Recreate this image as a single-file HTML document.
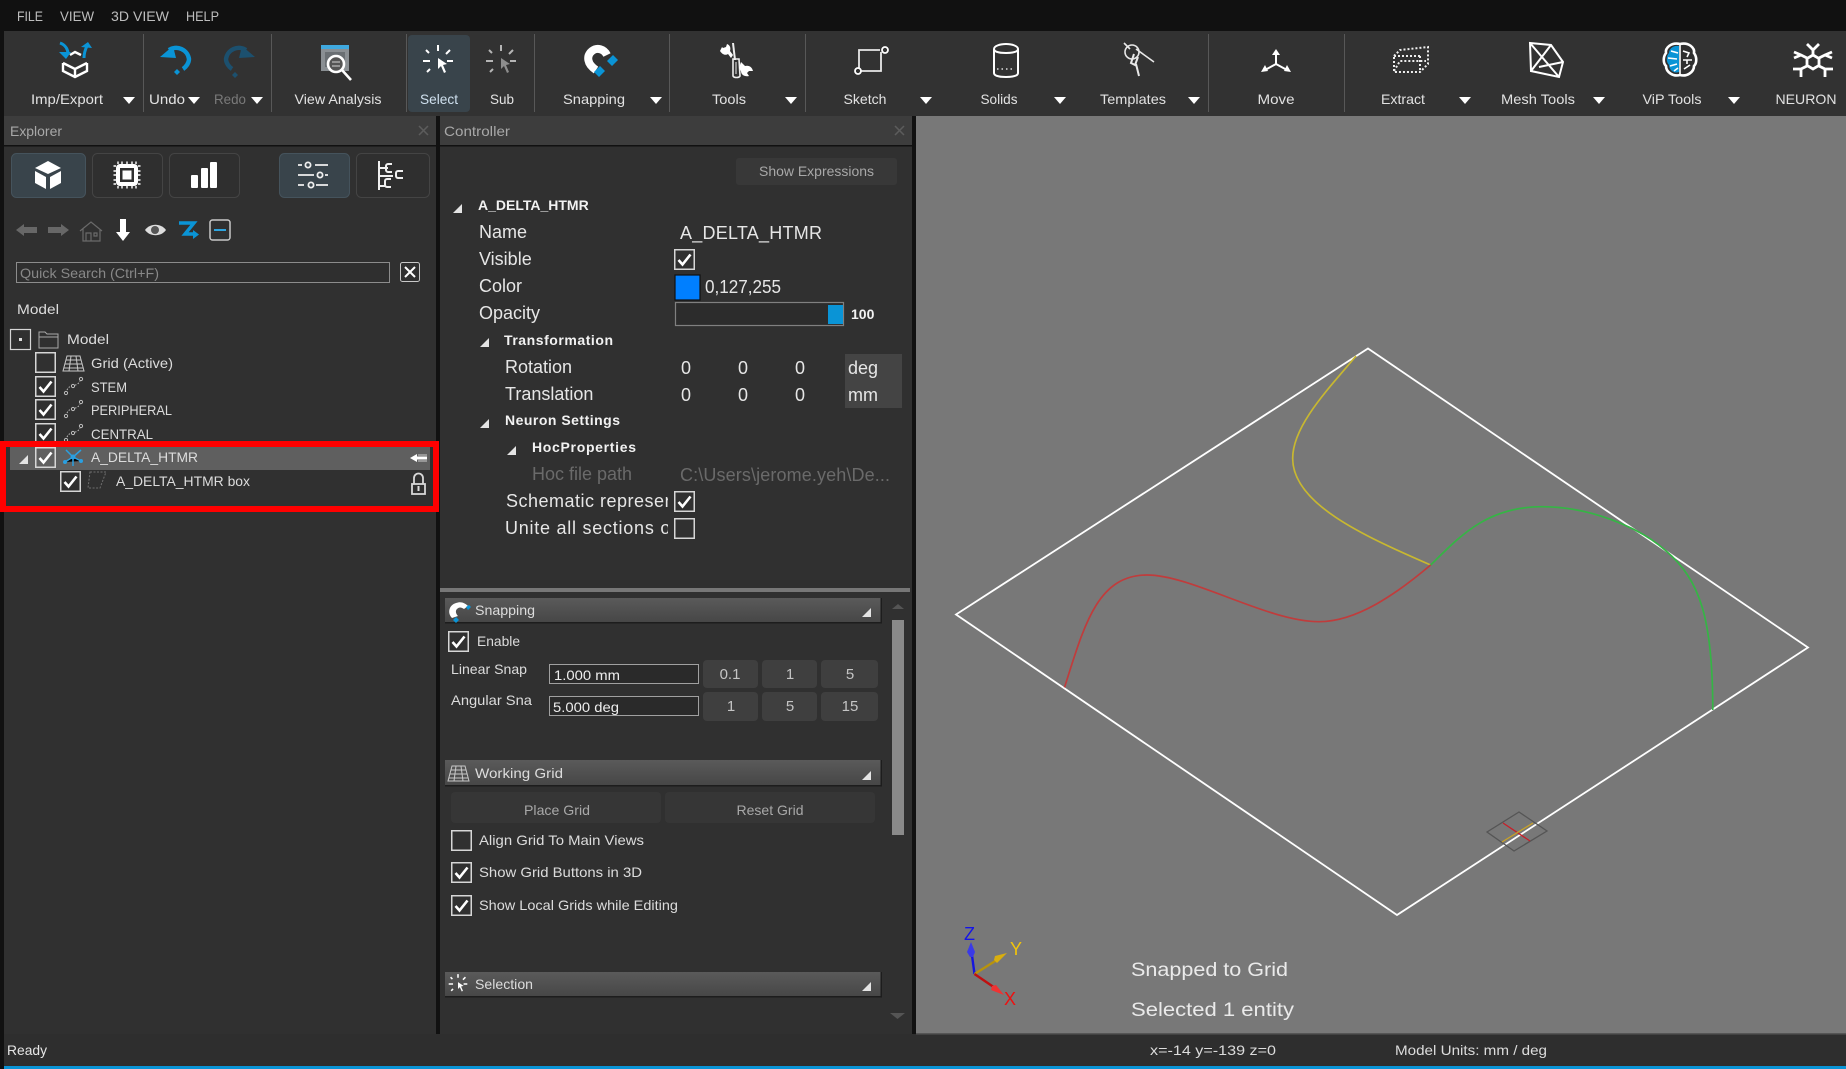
<!DOCTYPE html>
<html><head><meta charset="utf-8"><title>Sim4Life</title>
<style>
html,body{margin:0;padding:0;background:#111;width:1846px;height:1069px;overflow:hidden}
svg{display:block;position:absolute;left:0;top:0}
text{font-family:"Liberation Sans",sans-serif;font-size:14px;fill:#dcdcdc}
.m{fill:#bdbdbd}
.t{text-anchor:middle;fill:#e2e2e2}
.h{fill:#a8a8a8}
.v{fill:#c4c4c4;font-size:15px}
.p{font-size:18px;fill:#e6e6e6}
.b{font-weight:bold;fill:#f2f2f2}
.d{fill:#6a6a6a;font-size:18px}
.w{stroke:#fff;fill:none;stroke-width:2}
</style></head><body>
<svg width="1846" height="1069" viewBox="0 0 1846 1069" xmlns="http://www.w3.org/2000/svg">
<defs>
<linearGradient id="hd" x1="0" y1="0" x2="0" y2="1"><stop offset="0" stop-color="#5a5a5a"/><stop offset="1" stop-color="#464646"/></linearGradient>
<g id="cb"><rect x=".75" y=".75" width="19.5" height="19.5" fill="none" stroke="#d6d6d6" stroke-width="1.5"/></g>
<g id="cc"><rect x=".75" y=".75" width="19.5" height="19.5" fill="none" stroke="#d6d6d6" stroke-width="1.5"/><path d="M4.5 11l4 4.5 8-10" fill="none" stroke="#fff" stroke-width="2.6"/></g>
<g id="tri"><path d="M0 9h9V0z" fill="#e4e4e4"/></g>
<g id="car"><path d="M0 0h12l-6 7z" fill="#fff"/></g>
<g id="sp" fill="none" stroke="#bcbcbc" stroke-width="1"><circle cx="2" cy="16" r="1.6"/><circle cx="9" cy="9" r="1.6"/><circle cx="17" cy="2" r="1.6"/><path d="M3 13c1-2 2-3 4-4M11 8c2 0 4-2 5-4" stroke-dasharray="1.5 1.5"/></g>
<g id="sel" fill="none" stroke-linecap="butt"><path d="M0-16v6M-12-11l3 3M12-11l-4 4M-15 0h7M15 0H9M-11 11l3-3"/><path d="M0-3l9 6-4 1 3 7-2 1-3-7-3 3z" stroke="none" fill="currentColor"/></g>
<g id="gr" fill="none" stroke="#c8c8c8" stroke-width="1"><path d="M4 1h13l4 15H0zM8 1L6 16M13 1l2 15M3 5h15M2 9h17M1 13h19"/></g>
</defs>

<!-- base -->
<rect width="1846" height="1069" fill="#111"/>
<rect x="4" y="31" width="1842" height="85" fill="#323232"/>

<!-- menu -->
<text class="m" x="17" y="21" textLength="26" lengthAdjust="spacingAndGlyphs">FILE</text>
<text class="m" x="60" y="21" textLength="34" lengthAdjust="spacingAndGlyphs">VIEW</text>
<text class="m" x="111" y="21" textLength="58" lengthAdjust="spacingAndGlyphs">3D VIEW</text>
<text class="m" x="186" y="21" textLength="33" lengthAdjust="spacingAndGlyphs">HELP</text>

<!-- toolbar separators -->
<g fill="#585858"><rect x="143" y="34" width="1" height="78"/><rect x="271" y="34" width="1" height="78"/><rect x="406" y="34" width="1" height="78"/><rect x="534" y="34" width="1" height="78"/><rect x="669" y="34" width="1" height="78"/><rect x="805" y="34" width="1" height="78"/><rect x="1208" y="34" width="1" height="78"/><rect x="1344" y="34" width="1" height="78"/></g>
<rect x="408" y="35" width="62" height="77" rx="4" fill="#39444b"/>

<!-- toolbar labels -->
<text class="t" x="67" y="104" textLength="72" lengthAdjust="spacingAndGlyphs">Imp/Export</text>
<text class="t" x="167" y="104" textLength="36" lengthAdjust="spacingAndGlyphs">Undo</text>
<text class="t" x="230" y="104" textLength="32" lengthAdjust="spacingAndGlyphs" style="fill:#7a7a7a">Redo</text>
<text class="t" x="338" y="104" textLength="87" lengthAdjust="spacingAndGlyphs">View Analysis</text>
<text class="t" x="439" y="104" textLength="38" lengthAdjust="spacingAndGlyphs" style="fill:#cfe0ee">Select</text>
<text class="t" x="502" y="104" textLength="24" lengthAdjust="spacingAndGlyphs">Sub</text>
<text class="t" x="594" y="104" textLength="62" lengthAdjust="spacingAndGlyphs">Snapping</text>
<text class="t" x="729" y="104" textLength="34" lengthAdjust="spacingAndGlyphs">Tools</text>
<text class="t" x="865" y="104" textLength="43" lengthAdjust="spacingAndGlyphs">Sketch</text>
<text class="t" x="999" y="104" textLength="37" lengthAdjust="spacingAndGlyphs">Solids</text>
<text class="t" x="1133" y="104" textLength="66" lengthAdjust="spacingAndGlyphs">Templates</text>
<text class="t" x="1276" y="104" textLength="37" lengthAdjust="spacingAndGlyphs">Move</text>
<text class="t" x="1403" y="104" textLength="44" lengthAdjust="spacingAndGlyphs">Extract</text>
<text class="t" x="1538" y="104" textLength="74" lengthAdjust="spacingAndGlyphs">Mesh Tools</text>
<text class="t" x="1672" y="104" textLength="59" lengthAdjust="spacingAndGlyphs">ViP Tools</text>
<text class="t" x="1806" y="104" textLength="61" lengthAdjust="spacingAndGlyphs">NEURON</text>
<use href="#car" x="123" y="97"/><use href="#car" x="188" y="97"/><use href="#car" x="251" y="97"/><use href="#car" x="650" y="97"/><use href="#car" x="785" y="97"/><use href="#car" x="920" y="97"/><use href="#car" x="1054" y="97"/><use href="#car" x="1188" y="97"/><use href="#car" x="1459" y="97"/><use href="#car" x="1593" y="97"/><use href="#car" x="1728" y="97"/>

<!-- toolbar icons -->
<g fill="none" stroke="#fff" stroke-width="2.4"><path d="M63 63v8l12 6 12-6v-8M63 63l12 6 12-6M75 69v8M70 55l5-3 6 3"/></g>
<path d="M60 43c6 2 8 7 8 11" fill="none" stroke="#0a94d6" stroke-width="3"/><path d="M59 52h12l-5 7z" fill="#0a94d6"/>
<path d="M84 58c0-5 1-8 3-12" fill="none" stroke="#0a94d6" stroke-width="3"/><path d="M81 47l7-5 4 6z" fill="#0a94d6"/>

<path d="M169 50a13 13 0 0 1 20 9c0 4-3 8-6 10" fill="none" stroke="#0a94d6" stroke-width="4.4"/><path d="M160 57l13-11 3 12z" fill="#0a94d6"/><path d="M177 69l3 3-3 3-3-3z" fill="#0a94d6"/>
<path d="M246 50a13 13 0 0 0-20 9c0 4 3 8 6 10" fill="none" stroke="#1c506e" stroke-width="4.4"/><path d="M255 57l-13-11-3 12z" fill="#1c506e"/><path d="M235 72l3 3-3 3-3-3z" fill="#1c506e"/>

<rect x="321" y="45" width="28" height="26" fill="#8a8f93"/><rect x="321" y="45" width="28" height="4" fill="#3fa9df"/><rect x="325" y="52" width="20" height="15" fill="#6a6f73"/>
<circle cx="336" cy="64" r="8" fill="#555" stroke="#fff" stroke-width="2.6"/><path d="M332 62h8M332 66h8" stroke="#aaa" stroke-width="1.5"/><path d="M342 70l9 10" stroke="#fff" stroke-width="2.6"/>

<g transform="translate(438 61)" stroke="#fff" stroke-width="2" color="#fff"><use href="#sel"/></g>
<g transform="translate(501 61)" stroke="#b5b5b5" stroke-width="2" color="#8d8d8d"><use href="#sel"/></g>

<path d="M607 55C604 49 597 47 592 51 586 56 587 64 596 70" fill="none" stroke="#fff" stroke-width="8"/><path d="M613 55l5 5-6 6-5-5z" fill="#0a94d6"/><path d="M600 66l5 5-6 6-5-5z" fill="#0a94d6"/>

<path d="M732 43l2 0 2 17h-2z" fill="#eee"/><path d="M733 59h6l1 17c-1 2-6 2-7 0z" fill="none" stroke="#eee" stroke-width="1.6"/><path d="M736 62v12" stroke="#eee"/>
<path d="M720 50c2 3 5 5 8 3l3 4 2-3-3-4c1-3 0-6-3-7l-1 3-3 1-1-1z" fill="#fff" transform="translate(0 1)"/>
<path d="M741 62l4 4c4-1 7 1 8 5l-4 0-2 2 2 3c-4 1-8-1-8-5l-2-3z" fill="#fff"/>

<path d="M880 50h-21v19M881 52v19h-20" fill="none" stroke="#e8e8e8" stroke-width="1.8"/><circle cx="885" cy="50" r="3" fill="none" stroke="#fff" stroke-width="1.8"/><circle cx="858" cy="71" r="3" fill="none" stroke="#fff" stroke-width="1.8"/>

<path d="M994 49c0-3 6-5 12-5s12 2 12 5v24c0 3-6 4-12 4s-12-1-12-4zM994 49c0 3 6 4 12 4s12-1 12-4" fill="none" stroke="#fff" stroke-width="2"/><path d="M997 69h18" stroke="#ddd" stroke-width="1.5" stroke-dasharray="1.5 3"/>

<g fill="none" stroke="#e8e8e8" stroke-width="1.6"><circle cx="1132" cy="52" r="7"/><path d="M1124 43l6 6M1136 49l18 13" stroke-width="1.6"/><path d="M1134 54l-3 9 4 2 3-8M1136 64l3 12" stroke-width="2"/></g>

<g fill="#fff"><path d="M1276 49l-4 6h8z"/><path d="M1261 72l7-1-3-6z"/><path d="M1291 72l-7-1 3-6z"/></g><path d="M1276 53v11l-11 6M1276 64l11 6" stroke="#fff" stroke-width="2" fill="none"/>

<g fill="none" stroke="#eee" stroke-width="2" stroke-dasharray="2 2"><path d="M1394 56l6-6 28-3v17l-8 8h-26zM1394 71l6-10h26M1394 56h26M1420 56v16"/></g>

<g fill="none" stroke="#fff" stroke-width="2"><path d="M1530 43l21 2 12 17-4 15-28-6zM1530 43l29 34M1551 45l-20 26M1563 62l-24 5"/></g>

<path d="M1680 44c-9-2-15 4-14 9-3 4-3 10 0 13 0 6 7 11 14 9 7 2 14-3 14-9 3-3 3-9 0-13 1-5-5-11-14-9z" fill="#2f2f2f" stroke="#fff" stroke-width="2.6"/>
<path d="M1679 46c-6-1-10 3-10 7-3 3-3 9 0 12 0 5 5 9 10 7z" fill="#0a94d6"/><path d="M1680 44v31" stroke="#fff" stroke-width="1.6"/><path d="M1668 58l9 1M1671 51l7 2M1670 66l7-2M1674 71l4-3M1683 51l6 2-2 4M1683 60h9M1684 69l6-4M1687 60v4" stroke="#fff" stroke-width="1.6" fill="none"/>

<g fill="none" stroke="#fff" stroke-width="2.8"><path d="M1813 55l6 3.500v7l-6 3.500-6-3.500v-7z"/><path d="M1813 55v-5l-6-6M1813 50l6-6M1819 58l6-3 7-3M1825 55l7 3M1807 58l-6-3-7-3M1801 55l-7 3M1819 66l6 3h8M1825 69v8M1807 66l-6 3h-8M1801 69v8"/></g>

<!-- explorer panel -->
<rect x="4" y="116" width="432" height="918" fill="#303030"/>
<rect x="4" y="116" width="432" height="29" fill="#3d3d3d"/><rect x="4" y="145" width="432" height="1.5" fill="#111"/>
<text class="h" x="10" y="136" textLength="52" lengthAdjust="spacingAndGlyphs">Explorer</text>
<path d="M419 126l9 9M428 126l-9 9" stroke="#5c5c5c" stroke-width="1.5"/>

<g stroke-width="1"><rect x="11.5" y="153.5" width="74" height="44" rx="5" fill="#39444b" stroke="#45535c"/><rect x="92.5" y="153.5" width="70" height="44" rx="5" fill="#2f2f2f" stroke="#444"/><rect x="169.5" y="153.5" width="70" height="44" rx="5" fill="#2f2f2f" stroke="#444"/><rect x="279.5" y="153.5" width="70" height="44" rx="5" fill="#39444b" stroke="#45535c"/><rect x="356.5" y="153.5" width="73" height="44" rx="5" fill="#2f2f2f" stroke="#444"/></g>
<path d="M48 161l13 7-13 6-13-6z" fill="#fff"/><path d="M35 171l11 6v12l-11-6z" fill="#fff"/><path d="M61 171l-11 6v12l11-6z" fill="#fff"/>
<rect x="116" y="164" width="22" height="22" rx="4" fill="#fff"/><rect x="120" y="168" width="14" height="14" fill="#2f2f2f"/><rect x="122.500" y="170.500" width="9" height="9" fill="#fff"/>
<path d="M118 161.500v2.500M122 161.500v2.500M127 161.500v2.500M132 161.500v2.500M136 161.500v2.500M118 186v2.500M122 186v2.500M127 186v2.500M132 186v2.500M136 186v2.500M113.500 166h2.500M113.500 171h2.500M113.500 175h2.500M113.500 180h2.500M113.500 184h2.500M138 166h2.500M138 171h2.500M138 175h2.500M138 180h2.500M138 184h2.500" stroke="#fff" stroke-width="1.400"/>
<g fill="#fff"><rect x="191" y="175" width="7" height="13" rx="1"/><rect x="201" y="168" width="7" height="20" rx="1"/><rect x="210" y="162" width="7" height="26" rx="1"/></g>
<g fill="none" stroke="#eee" stroke-width="1.800"><path d="M298 165h4M315 165h13M298 175h16M325 175h3M298 185h6M316 185h12"/><circle cx="308" cy="165" r="2.600"/><circle cx="320" cy="175" r="2.600"/><circle cx="311" cy="185" r="2.600"/></g>
<g fill="none" stroke="#f0f0f0" stroke-width="2"><path d="M379 161v29M379 168h9M379 176h14M379 186h6M392 164h-4a2 2 0 0 0-2 2v4a2 2 0 0 0 2 2h4M403 171h-5a2 2 0 0 0-2 2v3a2 2 0 0 0 2 2h5M391 179h-4a2 2 0 0 0-2 2v4a2 2 0 0 0 2 2h4"/></g>

<!-- explorer tool row -->
<path d="M16 230l8-6v3h13v6H24v3z" fill="#676767"/><path d="M69 230l-8-6v3H48v6h13v3z" fill="#676767"/>
<path d="M80 231l11-9 11 9M83 229v12h17v-12M86 241v-8h5v8M94 233h3v3h-3z" fill="none" stroke="#6a6a6a" stroke-width="1.200"/>
<path d="M120 219h6v13h4l-7 9-7-9h4z" fill="#fff"/>
<path d="M145 230c5-7 16-7 21 0-5 7-16 7-21 0z" fill="#ddd"/><circle cx="155" cy="230" r="4" fill="#555"/>
<path d="M179 223h15l-9 11h8" fill="none" stroke="#0a94d6" stroke-width="3.400"/><path d="M193 230l6 4.500-6 4.500z" fill="#0a94d6"/>
<rect x="210" y="220" width="20" height="20" rx="2.500" fill="none" stroke="#c8c8c8" stroke-width="1.500"/><path d="M214 230h12" stroke="#2fa5df" stroke-width="2"/>

<!-- search -->
<rect x="16.500" y="262.500" width="373" height="20" fill="#2f2f2f" stroke="#8c8c8c"/>
<text x="20" y="278" textLength="139" lengthAdjust="spacingAndGlyphs" style="fill:#888">Quick Search (Ctrl+F)</text>
<rect x="400.500" y="262.500" width="19" height="19" rx="2" fill="none" stroke="#c8c8c8"/><path d="M405 267l10 10M415 267l-10 10" stroke="#fff" stroke-width="2"/>

<text x="17" y="314" textLength="42" lengthAdjust="spacingAndGlyphs">Model</text>

<!-- tree -->
<rect x="10.500" y="329.500" width="20" height="20" fill="none" stroke="#d6d6d6" stroke-width="1.200"/><rect x="19" y="338" width="3" height="3" fill="#ddd"/>
<path d="M39 346v-14h6l2 2h11v14H39zM39 337h19" fill="none" stroke="#a9a9a9"/>
<text x="67" y="344" textLength="42" lengthAdjust="spacingAndGlyphs">Model</text>

<use href="#cb" x="35" y="352"/><use href="#gr" x="63" y="355"/>
<text x="91" y="368" textLength="82" lengthAdjust="spacingAndGlyphs">Grid (Active)</text>
<use href="#cc" x="35" y="376"/><use href="#sp" x="64" y="377"/>
<text x="91" y="392" textLength="36" lengthAdjust="spacingAndGlyphs">STEM</text>
<use href="#cc" x="35" y="399"/><use href="#sp" x="64" y="400"/>
<text x="91" y="415" textLength="81" lengthAdjust="spacingAndGlyphs">PERIPHERAL</text>
<use href="#cc" x="35" y="423"/><use href="#sp" x="64" y="424"/>
<text x="91" y="439" textLength="62" lengthAdjust="spacingAndGlyphs">CENTRAL</text>

<rect x="10" y="447" width="420" height="23" fill="#5f5f5f"/>
<use href="#tri" x="19" y="455"/><use href="#cc" x="35" y="447"/>
<g stroke="#2a9fe0" stroke-width="1.500"><path d="M65 462l8-5 8 4M73 457l-7-7M73 457l8-7M73 457v9"/></g><circle cx="73" cy="457" r="2.500" fill="#2a9fe0"/><circle cx="65" cy="462" r="2" fill="#2a9fe0"/><circle cx="81" cy="461" r="2" fill="#2a9fe0"/>
<text x="91" y="462" textLength="107" lengthAdjust="spacingAndGlyphs">A_DELTA_HTMR</text>
<path d="M410 458l7-4v2.500h10v3h-10v2.500z" fill="#fff"/><path d="M418 455h9M418 461h9" stroke="#ccc"/>

<use href="#cc" x="60" y="471"/>
<path d="M90 472h16l-6 16H88z" fill="none" stroke="#6e6e6e" stroke-dasharray="2 1.500"/>
<text x="116" y="486" textLength="134" lengthAdjust="spacingAndGlyphs">A_DELTA_HTMR box</text>
<path d="M414 484v-6a4.500 4.500 0 0 1 9 0v6" fill="none" stroke="#d8d8d8" stroke-width="1.800"/><rect x="412" y="484" width="13" height="10" fill="none" stroke="#d8d8d8" stroke-width="1.800"/><rect x="417.500" y="486" width="2" height="5" fill="#ddd"/>

<rect x="3" y="444" width="433" height="65" fill="none" stroke="#f00" stroke-width="6"/>

<!-- controller -->
<rect x="440" y="116" width="472" height="918" fill="#303030"/>
<rect x="440" y="116" width="472" height="29" fill="#3d3d3d"/><rect x="440" y="145" width="472" height="1.500" fill="#111"/>
<text class="h" x="444" y="136" textLength="66" lengthAdjust="spacingAndGlyphs">Controller</text>
<path d="M895 126l9 9M904 126l-9 9" stroke="#5c5c5c" stroke-width="1.500"/>
<rect x="736" y="158" width="161" height="27" rx="3" fill="#383838"/>
<text x="816.500" y="176" text-anchor="middle" textLength="115" lengthAdjust="spacingAndGlyphs" class="h">Show Expressions</text>

<use href="#tri" x="453" y="204"/>
<text class="b" x="478" y="210">A_DELTA_HTMR</text>
<text class="p" x="479" y="238">Name</text><text class="p" x="680" y="239" textLength="142">A_DELTA_HTMR</text>
<text class="p" x="479" y="265">Visible</text><use href="#cc" x="674" y="249"/>
<text class="p" x="479" y="292">Color</text>
<rect x="675" y="275" width="25" height="25" fill="#007fff" stroke="#111" stroke-width="1.200"/>
<text class="p" x="705" y="293" textLength="76" lengthAdjust="spacingAndGlyphs">0,127,255</text>
<text class="p" x="479" y="319">Opacity</text>
<rect x="675.500" y="302.500" width="168" height="23" fill="#2c2c2c" stroke="#808080" stroke-width="1.200"/><rect x="828" y="305" width="15" height="19" fill="#0a94d6"/>
<text class="b" x="851" y="319">100</text>

<use href="#tri" x="480" y="338"/><text class="b" x="504" y="345" textLength="109" lengthAdjust="spacing">Transformation</text>
<text class="p" x="505" y="373">Rotation</text>
<text class="p" x="505" y="400">Translation</text>
<g class="p"><text class="p" x="681" y="374">0</text><text class="p" x="738" y="374">0</text><text class="p" x="795" y="374">0</text><text class="p" x="681" y="401">0</text><text class="p" x="738" y="401">0</text><text class="p" x="795" y="401">0</text></g>
<rect x="845" y="354" width="57" height="54" fill="#444"/>
<text class="p" x="848" y="374">deg</text><text class="p" x="848" y="401">mm</text>

<use href="#tri" x="480" y="419"/><text class="b" x="505" y="425" textLength="115" lengthAdjust="spacing">Neuron Settings</text>
<use href="#tri" x="507" y="446"/><text class="b" x="532" y="452" textLength="104" lengthAdjust="spacing">HocProperties</text>
<text class="d" x="532" y="480">Hoc file path</text><text class="d" x="680" y="481" textLength="210">C:\Users\jerome.yeh\De...</text>
<svg x="440" y="485" width="228" height="60"><text class="p" x="66" y="22" style="letter-spacing:.5px">Schematic representation</text><text class="p" x="65" y="49" style="letter-spacing:.75px">Unite all sections of</text></svg>
<use href="#cc" x="674" y="491"/><use href="#cb" x="674" y="518"/>

<rect x="440" y="588" width="470" height="4" fill="#777"/>

<!-- lower panels -->
<rect x="445" y="598" width="436" height="25" fill="url(#hd)"/><rect x="445" y="622" width="437" height="1.500" fill="#1d1d1d"/><rect x="880.500" y="598" width="1.500" height="25" fill="#1d1d1d"/>
<path d="M452 618c-5-5-3-13 4-15 5-2 9 0 12 3l-4 3c-3-2-5-2-7 0-2 2-1 5 1 7z" fill="#fff"/><path d="M466 607l3-2 2 2-3 3z" fill="#0a94d6"/><path d="M456 617l3 3-3 3-3-3z" fill="#0a94d6"/>
<text x="475" y="615" textLength="60" lengthAdjust="spacingAndGlyphs">Snapping</text><use href="#tri" x="862" y="608"/>

<use href="#cc" x="448" y="631"/>
<text x="477" y="646" textLength="43" lengthAdjust="spacingAndGlyphs">Enable</text>
<text x="451" y="674" textLength="76" lengthAdjust="spacingAndGlyphs">Linear Snap</text>
<text x="451" y="705" textLength="81" lengthAdjust="spacingAndGlyphs">Angular Sna</text>
<rect x="549.500" y="664.500" width="149" height="19" fill="#2a2a2a" stroke="#a0a0a0"/><rect x="549.500" y="696.500" width="149" height="19" fill="#2a2a2a" stroke="#a0a0a0"/>
<text x="554" y="680" textLength="66" lengthAdjust="spacingAndGlyphs" style="fill:#eee">1.000 mm</text><text x="553" y="712" textLength="66" lengthAdjust="spacingAndGlyphs" style="fill:#eee">5.000 deg</text>
<g fill="#3f3f3f"><rect x="703" y="660" width="55" height="28" rx="4"/><rect x="762" y="660" width="55" height="28" rx="4"/><rect x="821" y="660" width="57" height="28" rx="4"/><rect x="703" y="692" width="55" height="29" rx="4"/><rect x="762" y="692" width="55" height="29" rx="4"/><rect x="821" y="692" width="57" height="29" rx="4"/></g>
<text x="730" y="679" text-anchor="middle" class="v">0.1</text><text x="790" y="679" text-anchor="middle" class="v">1</text><text x="850" y="679" text-anchor="middle" class="v">5</text><text x="731" y="711" text-anchor="middle" class="v">1</text><text x="790" y="711" text-anchor="middle" class="v">5</text><text x="850" y="711" text-anchor="middle" class="v">15</text>

<rect x="445" y="760" width="436" height="26" fill="url(#hd)"/><rect x="445" y="785" width="437" height="1.500" fill="#1d1d1d"/><rect x="880.500" y="760" width="1.500" height="26" fill="#1d1d1d"/>
<use href="#gr" x="448" y="765"/>
<text x="475" y="778" textLength="88" lengthAdjust="spacingAndGlyphs">Working Grid</text><use href="#tri" x="862" y="771"/>
<rect x="451" y="792" width="210" height="31" rx="4" fill="#363636"/><rect x="665" y="792" width="210" height="31" rx="4" fill="#363636"/>
<text x="557" y="815" text-anchor="middle" textLength="66" lengthAdjust="spacingAndGlyphs" class="h">Place Grid</text><text x="770" y="815" text-anchor="middle" textLength="67" lengthAdjust="spacingAndGlyphs" class="h">Reset Grid</text>
<use href="#cb" x="451" y="830"/><text x="479" y="845" textLength="165" lengthAdjust="spacingAndGlyphs">Align Grid To Main Views</text>
<use href="#cc" x="451" y="862"/><text x="479" y="877" textLength="163" lengthAdjust="spacingAndGlyphs">Show Grid Buttons in 3D</text>
<use href="#cc" x="451" y="895"/><text x="479" y="910" textLength="199" lengthAdjust="spacingAndGlyphs">Show Local Grids while Editing</text>

<rect x="445" y="972" width="436" height="25" fill="url(#hd)"/><rect x="445" y="996" width="437" height="1.500" fill="#1d1d1d"/><rect x="880.500" y="972" width="1.500" height="25" fill="#1d1d1d"/>
<g transform="translate(458 984) scale(.62)" stroke="#fff" stroke-width="2.500" color="#fff"><use href="#sel"/></g>
<text x="475" y="989" textLength="58" lengthAdjust="spacingAndGlyphs">Selection</text><use href="#tri" x="862" y="982"/>

<path d="M892 609l6-5 6 5z" fill="#555"/><rect x="892" y="620" width="12" height="215" fill="#8a8a8a"/><path d="M890 1013h15l-7.500 6z" fill="#555"/>

<!-- viewport -->
<rect x="916" y="116" width="930" height="918" fill="#787878"/>
<polygon points="1368,348.500 1808,647.500 1397,915 956,614.500" fill="none" stroke="#fff" stroke-width="1.800"/>
<g transform="translate(1040 330) scale(.44643 .33333)" fill="none" stroke-width="5">
<path d="M708 78C640 185 566 290 566 385 566 520 720 615 875 705" stroke="#c8b830" vector-effect="non-scaling-stroke" style="stroke-width:1.700"/>
<path d="M875 705C940 620 1000 530 1125 530 1230 530 1340 590 1400 660 1480 750 1507 870 1507 1140" stroke="#35b545" vector-effect="non-scaling-stroke" style="stroke-width:1.700"/>
<path d="M875 705C800 790 710 875 625 875 510 875 340 735 240 735 130 735 100 880 55 1072" stroke="#c03c3c" vector-effect="non-scaling-stroke" style="stroke-width:1.700"/>
</g>
<polygon points="1519,812 1547,831 1514,851 1487,832" fill="none" stroke="#555" stroke-width="1.300"/>
<path d="M1503 823l27 18" stroke="#c81e28" stroke-width="1.300"/><path d="M1502 842l31-19" stroke="#c9a227" stroke-width="1.300"/>

<!-- axes -->
<path d="M974.500 974L971 948" stroke="#1515e0" stroke-width="2.400" fill="none"/><path d="M971 942l-4 10 3 5h3l2-5z" fill="#3a3ae8"/>
<path d="M974.500 974L1000 958" stroke="#b8930c" stroke-width="2.400" fill="none"/><path d="M1007 953l-12 3-1 4 3 3z" fill="#d9ae0e"/>
<path d="M974.500 974L998 990" stroke="#c01010" stroke-width="2.400" fill="none"/><path d="M1004 995l-8-10-4 1-1 4z" fill="#e33"/>
<text x="964" y="940" style="fill:#1515e8;font-size:18px">Z</text>
<text x="1010" y="955" style="fill:#f2c40a;font-size:18px">Y</text>
<text x="1004" y="1005" style="fill:#ee1010;font-size:18px">X</text>
<text x="1131" y="976" textLength="157" lengthAdjust="spacingAndGlyphs" style="fill:#eaeaea;font-size:19px">Snapped to Grid</text>
<text x="1131" y="1016" textLength="163" lengthAdjust="spacingAndGlyphs" style="fill:#eaeaea;font-size:19px">Selected 1 entity</text>

<!-- status -->
<rect x="4" y="1034" width="1842" height="32" fill="#2e2e2e"/><rect x="916" y="1033" width="930" height="1.500" fill="#555"/>
<rect x="4" y="1066" width="1842" height="3" fill="#0a94d6"/>
<text x="7" y="1055" textLength="40" lengthAdjust="spacingAndGlyphs" style="fill:#e6e6e6">Ready</text>
<text x="1150" y="1055" textLength="126" lengthAdjust="spacingAndGlyphs">x=-14 y=-139 z=0</text>
<text x="1395" y="1055" textLength="152" lengthAdjust="spacingAndGlyphs">Model Units: mm / deg</text>
</svg>
</body></html>
